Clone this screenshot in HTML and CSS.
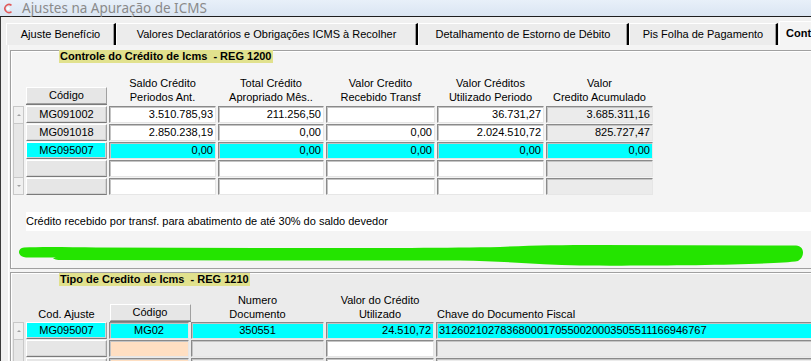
FILE: index.html
```html
<!DOCTYPE html>
<html lang="pt-BR">
<head>
  <meta charset="UTF-8">
  <meta name="viewport" content="width=device-width, initial-scale=1.0">
  <title>Ajustes na Apuração de ICMS</title>
  <link rel="stylesheet" href="styles.css">
</head>
<body>
  <div class="window">
    <div class="titlebar">
      <svg class="app-icon" width="11" height="11" viewBox="0 0 11 11">
        <path d="M8.5 2.4 A4 4 0 1 0 8.5 8.6" fill="none" stroke="#e05a5a" stroke-width="1.6"/>
        <circle cx="5.2" cy="5.5" r="1.5" fill="#fff"/>
      </svg>
      <span class="title">Ajustes na Apuração de ICMS</span>
    </div>

    <div class="client">
      <div class="tabs">
        <div class="tab t1">Ajuste Benefício</div>
        <div class="tab t2">Valores Declaratórios e Obrigações ICMS à Recolher</div>
        <div class="tab t3">Detalhamento de Estorno de Débito</div>
        <div class="tab t4">Pis Folha de Pagamento</div>
        <div class="tab t5 active">Controle do Crédito de Icms</div>
      </div>

      <div class="page">
        <!-- REG 1200 -->
        <div class="group g1">
          <div class="group-title">Controle do Crédito de Icms&nbsp; - REG 1200</div>
          <div class="grid grid1">
            <div class="hd"></div>
            <div class="hd"><span class="hbtn">Código</span></div>
            <div class="hd">Saldo Crédito<br>Periodos Ant.</div>
            <div class="hd">Total Crédito<br>Apropriado Mês..</div>
            <div class="hd">Valor Credito<br>Recebido Transf</div>
            <div class="hd">Valor Créditos<br>Utilizado Periodo</div>
            <div class="hd">Valor<br>Credito Acumulado</div>

            <div class="scroll rows5">
              <div class="sb-btn"><span class="arrow up"></span></div>
              <div class="sb-track"></div>
              <div class="sb-btn"><span class="arrow down"></span></div>
            </div>

            <div class="cell code">MG091002</div>
            <div class="cell num">3.510.785,93</div>
            <div class="cell num">211.256,50</div>
            <div class="cell num"></div>
            <div class="cell num">36.731,27</div>
            <div class="cell num ro">3.685.311,16</div>

            <div class="cell code">MG091018</div>
            <div class="cell num">2.850.238,19</div>
            <div class="cell num">0,00</div>
            <div class="cell num">0,00</div>
            <div class="cell num">2.024.510,72</div>
            <div class="cell num ro">825.727,47</div>

            <div class="cell code sel">MG095007</div>
            <div class="cell num sel">0,00</div>
            <div class="cell num sel">0,00</div>
            <div class="cell num sel">0,00</div>
            <div class="cell num sel">0,00</div>
            <div class="cell num sel">0,00</div>

            <div class="cell code"></div>
            <div class="cell"></div>
            <div class="cell"></div>
            <div class="cell"></div>
            <div class="cell"></div>
            <div class="cell ro"></div>

            <div class="cell code"></div>
            <div class="cell"></div>
            <div class="cell"></div>
            <div class="cell"></div>
            <div class="cell"></div>
            <div class="cell ro"></div>
          </div>

          <div class="note">Crédito recebido por transf. para abatimento de até 30% do saldo devedor</div>

          <svg class="scribble" width="800" height="24" viewBox="13 244 800 24">
            <path d="M24 247.5 C40 246.5 70 247 96 247.5 L300 248 C380 248 450 248 500 247 C530 245.5 560 245 600 245 L796 245.5 C805 246 805 257 798 261 C770 265.5 640 266 580 265.5 C540 265 505 261 460 260.5 L300 260.5 L60 260 C52 259.5 52 258 56 257.5 L26 257.5 C17 257 17 248 24 247.5 Z" fill="#24e400"/>
          </svg>
        </div>

        <!-- REG 1210 -->
        <div class="group g2">
          <div class="group-title">Tipo de Credito de Icms&nbsp; - REG 1210</div>
          <div class="grid grid2">
            <div class="hd"></div>
            <div class="hd">Cod. Ajuste</div>
            <div class="hd"><span class="hbtn wide">Código</span></div>
            <div class="hd">Numero<br>Documento</div>
            <div class="hd">Valor do Crédito<br>Utilizado</div>
            <div class="hd left">Chave do Documento Fiscal</div>

            <div class="scroll rows3">
              <div class="sb-btn"><span class="arrow up"></span></div>
              <div class="sb-track"></div>
            </div>

            <div class="cell code sel">MG095007</div>
            <div class="cell mid sel">MG02</div>
            <div class="cell mid sel">350551</div>
            <div class="cell num sel">24.510,72</div>
            <div class="cell sel">31260210278368000170550020003505511166946767</div>

            <div class="cell code"></div>
            <div class="cell peach"></div>
            <div class="cell ro"></div>
            <div class="cell"></div>
            <div class="cell ro"></div>

            <div class="cell code"></div>
            <div class="cell peach"></div>
            <div class="cell ro"></div>
            <div class="cell"></div>
            <div class="cell ro"></div>
          </div>
        </div>
      </div>
    </div>
  </div>
</body>
</html>
```

FILE: styles.css
```css
* {
  box-sizing: border-box;
}
body {
  margin: 0;
  width: 811px;
  height: 361px;
  overflow: hidden;
  background: #f0f0f0;
  font-family: "Liberation Sans", Arial, sans-serif;
  font-size: 11px;
  color: #000;
}
.window {
  width: 900px;
}
.titlebar {
  height: 17px;
  display: flex;
  align-items: center;
  gap: 8px;
  padding-left: 3px;
  background: linear-gradient(#e8f0f9, #dae5f2);
  border-bottom: 1px solid #1e1e1e;
}
.title {
  font-family: "Noto Sans", sans-serif;
  font-size: 13.5px;
  color: #8a8a8a;
  line-height: 16px;
}
.client {
  border-left: 1px solid #3a3a3a;
  background: #f0f0f0;
  height: 344px;
}

/* tabs */
.tabs {
  display: flex;
  align-items: flex-end;
  height: 28px;
  padding-left: 5px;
}
.tab {
  height: 22px;
  line-height: 20px;
  text-align: center;
  white-space: nowrap;
  overflow: hidden;
  background: #ececec;
  border-top: 1px solid #fff;
  border-left: 1px solid #fff;
  border-right: 2px solid #000;
  box-shadow: inset -1px 0 0 #a0a0a0;
}
.t1 { width: 110px; }
.t2 { width: 302px; }
.t3 { width: 211px; }
.t4 { width: 149px; }
.t5 { width: 110px; margin-left: 1px; }
.tab.active {
  height: 24px;
  line-height: 22px;
  background: #f4f4f4;
  font-weight: bold;
  text-align: left;
  padding-left: 6px;
  border-right: none;
  box-shadow: none;
}

/* page */
.page {
  margin-left: 7px;
  border-left: 1px solid #fff;
  padding: 5px 0 0 1px;
  background: #f4f4f4;
  height: 316px;
}
.group {
  border: 1px solid #a0a0a0;
  box-shadow: inset 1px 1px 0 #fff;
  padding-left: 2px;
}
.g1 {
  background: #f4f4f4;
}
.g2 {
  margin-top: 3px;
  background: #ebebeb;
  height: 100px;
}
.group-title {
  width: fit-content;
  margin-left: 46px;
  padding: 0 1px;
  height: 13px;
  line-height: 13px;
  font-weight: bold;
  background: #e1e18d;
}
.g1 .group-title {
  margin-top: -1px;
}

/* grids */
.grid {
  display: grid;
  column-gap: 2px;
  row-gap: 1px;
}
.grid1 {
  margin-top: 13px;
  grid-template-columns: 11px 81px 107px 106px 109px 107px 107px;
  grid-template-rows: 29px repeat(5, 17px);
}
.grid2 {
  margin-top: 7px;
  grid-template-columns: 11px 81px 80px 133px 108px 1fr;
  grid-template-rows: 28px repeat(3, 17px);
}
.hd {
  display: flex;
  flex-direction: column;
  justify-content: flex-end;
  align-items: center;
  text-align: center;
  line-height: 14px;
  padding-bottom: 1px;
  white-space: nowrap;
}
.grid2 .hd {
  padding-bottom: 0;
}
.hd.left {
  align-items: flex-start;
  padding-left: 1px;
}
.hbtn {
  display: block;
  width: 100%;
  height: 17px;
  line-height: 15px;
  text-align: center;
  background: #e6e6e6;
  border: 1px solid;
  border-color: #fff #a0a0a0 #a0a0a0 #fff;
  box-shadow: 0 1px 0 #7a7a7a;
}
.hbtn.wide {
  width: 81px;
  margin-left: 2px;
}

/* cells */
.cell {
  height: 17px;
  line-height: 14px;
  padding: 0 2px;
  white-space: nowrap;
  overflow: hidden;
  background: #fff;
  border: 1px solid;
  border-color: #8a8a8a #e6e6e6 #e6e6e6 #8a8a8a;
  box-shadow: inset 1px 1px 0 #c4c4c4;
}
.cell.num {
  text-align: right;
}
.cell.mid {
  text-align: center;
}
.cell.code {
  text-align: center;
  background: #e6e6e6;
  border-color: #fff #a0a0a0 #7a7a7a #fff;
  box-shadow: inset -1px -1px 0 #d2d2d2;
}
.cell.ro {
  background: #ebebeb;
}
.cell.peach {
  background: #ffdfc2;
}
.cell.sel {
  background: #00ffff;
}

/* scrollbar */
.scroll {
  display: flex;
  flex-direction: column;
  border: 1px solid #c8c8c8;
  background: #f0f0f0;
}
.rows5 { grid-row: 2 / 7; }
.rows3 { grid-row: 2 / 5; }
.sb-btn {
  height: 16px;
  display: flex;
  align-items: center;
  justify-content: center;
  background: #f0f0f0;
}
.sb-track {
  flex: 1;
  background: #e6e6e6;
  border-top: 1px solid #c8c8c8;
  border-bottom: 1px solid #c8c8c8;
}
.rows3 .sb-track {
  border-bottom: none;
}
.arrow {
  width: 0;
  height: 0;
  border-left: 2px solid transparent;
  border-right: 2px solid transparent;
}
.arrow.up {
  border-bottom: 2px solid #a0a0a0;
}
.arrow.down {
  border-top: 2px solid #a0a0a0;
}

/* note + scribble */
.note {
  margin: 17px 0 0 13px;
  height: 19px;
  line-height: 19px;
  background: #fff;
}
.scribble {
  display: block;
  margin-top: 13px;
}
```
